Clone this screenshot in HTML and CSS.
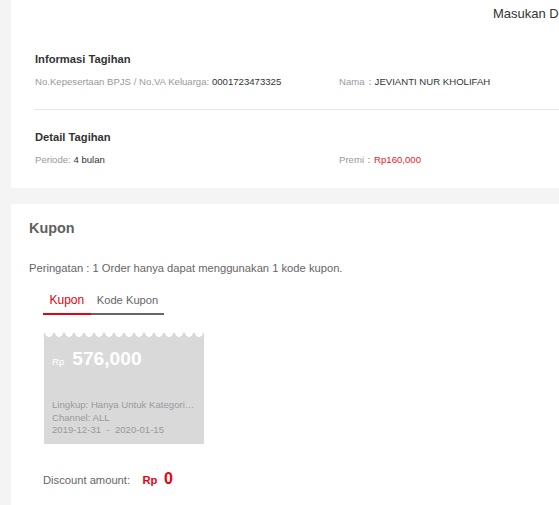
FILE: index.html
```html
<!DOCTYPE html>
<html>
<head>
<meta charset="utf-8">
<link rel="stylesheet" href="styles.css">
</head>
<body>
<div class="page">
  <div class="panel bill">
    <div class="bill-header">Masukan Data</div>
    <div class="section">
      <div class="section-title">Informasi Tagihan</div>
      <div class="info-row">
        <div><span class="label">No.Kepesertaan BPJS / No.VA Keluarga: </span><span class="value">0001723473325</span></div>
        <div><span class="label">Nama：</span><span class="value">JEVIANTI NUR KHOLIFAH</span></div>
      </div>
    </div>
    <div class="divider"></div>
    <div class="section second">
      <div class="section-title">Detail Tagihan</div>
      <div class="info-row">
        <div><span class="label">Periode: </span><span class="value">4 bulan</span></div>
        <div><span class="label">Premi：</span><span class="value red">Rp160,000</span></div>
      </div>
    </div>
  </div>

  <div class="panel coupon-panel">
    <div class="coupon-title">Kupon</div>
    <div class="notice">Peringatan : 1 Order hanya dapat menggunakan 1 kode kupon.</div>
    <div class="tabs">
      <div class="tab active">Kupon</div>
      <div class="tab">Kode Kupon</div>
    </div>
    <div class="coupon-card">
      <div class="amount"><span class="cur">Rp</span><span class="num">576,000</span></div>
      <div class="meta">
        <div class="ellipsis">Lingkup: Hanya Untuk Kategori Tertentu</div>
        <div>Channel: ALL</div>
        <div class="dates">2019-12-31  -  2020-01-15</div>
      </div>
    </div>
    <div class="discount">
      <span class="d-label">Discount amount:</span>
      <span class="d-cur">Rp</span>
      <span class="d-num">0</span>
    </div>
  </div>
</div>
</body>
</html>
```

FILE: styles.css
```css
html, body {
  margin: 0;
  padding: 0;
  overflow: hidden;
}
body {
  font-family: "Liberation Sans", Arial, sans-serif;
  background: #f4f4f4;
  color: #333;
}
.page {
  background: #f4f4f4;
  padding-left: 11px;
  min-height: 505px;
}
.panel {
  background: #fff;
  overflow: hidden;
}
.bill {
  padding: 0 0 21px 24px;
}
.bill-header {
  height: 28px;
  line-height: 28px;
  padding-left: 458px;
  font-size: 13px;
  color: #333;
  white-space: nowrap;
}
.section {
  margin-top: 21px;
}
.section.second {
  margin-top: 17px;
}
.section-title {
  font-size: 11.2px;
  font-weight: bold;
  line-height: 20px;
  color: #333;
}
.info-row {
  display: grid;
  grid-template-columns: 304px 1fr;
  margin-top: 5px;
  font-size: 9.6px;
  line-height: 15px;
  white-space: nowrap;
}
.label {
  color: #999;
}
.value {
  color: #333;
}
.value.red {
  color: #f5141e;
}
.divider {
  height: 1px;
  background: #e6e6e6;
  margin-top: 20px;
}
.coupon-panel {
  margin-top: 16px;
  padding: 14px 0 40px 18px;
}
.coupon-title {
  font-size: 14.4px;
  font-weight: bold;
  line-height: 20px;
  color: #5f5f5f;
}
.notice {
  margin-top: 22px;
  font-size: 11.2px;
  line-height: 16px;
  color: #666;
}
.tabs {
  display: flex;
  margin-top: 16px;
  margin-left: 14px;
}
.tab {
  font-size: 11.2px;
  line-height: 16px;
  padding: 0 6px 5px 6px;
  color: #666;
  border-bottom: 2px solid #666;
}
.tab.active {
  font-size: 12px;
  padding: 0 6.5px 5px 6.5px;
  color: #e60012;
  border-bottom-color: #e60012;
}
.coupon-card {
  margin: 18px 0 0 15px;
  width: 160px;
  height: 111px;
  box-sizing: border-box;
  padding: 12px 8px 0 8px;
  background:
    radial-gradient(circle at 5px 0, #fff 3.5px, rgba(255,255,255,0) 4px) 0 0 / 10px 6px repeat-x,
    #d9d9d9;
}
.amount {
  line-height: 28px;
  color: #fff;
  white-space: nowrap;
}
.cur {
  font-size: 9.6px;
  margin-right: 8px;
}
.num {
  font-size: 19.2px;
  font-weight: bold;
}
.meta {
  margin-top: 23px;
  font-size: 9.6px;
  line-height: 12.5px;
  color: #9a9a9a;
}
.ellipsis {
  white-space: nowrap;
  overflow: hidden;
  text-overflow: ellipsis;
}
.dates {
  white-space: pre;
}
.discount {
  margin: 25px 0 0 14px;
  line-height: 20px;
  white-space: nowrap;
}
.d-label {
  font-size: 11.2px;
  color: #666;
}
.d-cur {
  font-size: 11.2px;
  font-weight: bold;
  color: #e60012;
  margin-left: 8px;
}
.d-num {
  font-size: 16px;
  font-weight: bold;
  color: #e60012;
  margin-left: 2px;
}
```
